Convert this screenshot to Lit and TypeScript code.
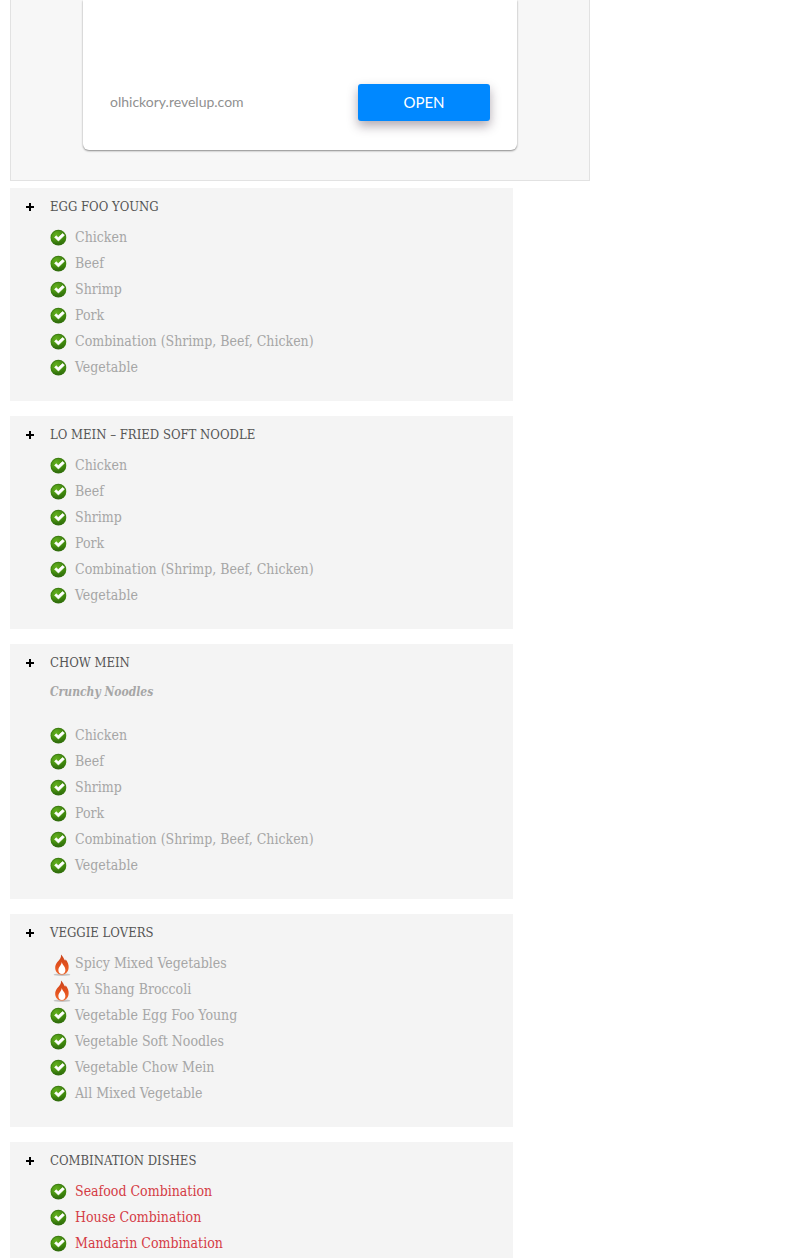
import { LitElement, html, css, nothing } from 'lit';
import { customElement } from 'lit/decorators.js';

type Mark = 'check' | 'flame';

interface Dish {
  name: string;
  mark?: Mark;
  featured?: boolean;
}

interface Section {
  title: string;
  note?: string;
  dishes: Dish[];
}

const proteins: Dish[] = [
  { name: 'Chicken' },
  { name: 'Beef' },
  { name: 'Shrimp' },
  { name: 'Pork' },
  { name: 'Combination (Shrimp, Beef, Chicken)' },
  { name: 'Vegetable' },
];

const sections: Section[] = [
  { title: 'EGG FOO YOUNG', dishes: proteins },
  { title: 'LO MEIN – FRIED SOFT NOODLE', dishes: proteins },
  { title: 'CHOW MEIN', note: 'Crunchy Noodles', dishes: proteins },
  {
    title: 'VEGGIE LOVERS',
    dishes: [
      { name: 'Spicy Mixed Vegetables', mark: 'flame' },
      { name: 'Yu Shang Broccoli', mark: 'flame' },
      { name: 'Vegetable Egg Foo Young' },
      { name: 'Vegetable Soft Noodles' },
      { name: 'Vegetable Chow Mein' },
      { name: 'All Mixed Vegetable' },
    ],
  },
  {
    title: 'COMBINATION DISHES',
    dishes: [
      { name: 'Seafood Combination', featured: true },
      { name: 'House Combination', featured: true },
      { name: 'Mandarin Combination', featured: true },
    ],
  },
];

const plusIcon = html`<svg class="plus" viewBox="0 0 8 8" aria-hidden="true">
  <path d="M3 0h2v3h3v2H5v3H3V5H0V3h3z" fill="#000" />
</svg>`;

const checkIcon = html`<svg class="mark" viewBox="0 0 25 26" aria-hidden="true">
  <defs>
    <linearGradient id="leaf" x1="0" y1="0" x2="0" y2="1">
      <stop offset="0" stop-color="#3c7a12" />
      <stop offset="0.5" stop-color="#3f8a0c" />
      <stop offset="1" stop-color="#2f6a0c" />
    </linearGradient>
    <radialGradient id="glow" cx="0.35" cy="0.3" r="0.6">
      <stop offset="0" stop-color="#62b01c" />
      <stop offset="1" stop-color="#62b01c" stop-opacity="0" />
    </radialGradient>
  </defs>
  <circle cx="8.4" cy="13.7" r="7.9" fill="url(#leaf)" />
  <circle cx="8.4" cy="13.7" r="7" fill="url(#glow)" />
  <path d="M4.6 13.2 L6.2 11.8 L8.2 13.6 L12.6 9.6 L14.4 11.2 L8.4 17 Z" fill="#fff" stroke="#fff" stroke-width="0.7" stroke-linejoin="round" />
</svg>`;

const flameIcon = html`<svg class="mark" viewBox="0 0 25 26" aria-hidden="true">
  <defs>
    <linearGradient id="fire" x1="0" y1="0" x2="0" y2="1">
      <stop offset="0" stop-color="#c8441c" />
      <stop offset="0.5" stop-color="#e2501e" />
      <stop offset="1" stop-color="#f0662a" />
    </linearGradient>
  </defs>
  <ellipse cx="12" cy="24.7" rx="8.4" ry="1.2" fill="#c4c4c4" />
  <path d="M11 4.5 C13.4 6.8 13.8 9 15 10.6 C15.5 10.4 15.6 9.8 15.5 9.2 C17.8 11.8 19 14.8 18.6 18 C18.2 22 15.6 24.6 12 24.6 C8.2 24.6 5.4 22 5.2 18.2 C5 15.4 6.2 13.6 7.4 12 C9.8 9.4 11.4 7.8 11 4.5 Z" fill="url(#fire)" />
  <path d="M11.8 12 C12.2 15 15.6 16.6 15.4 20.2 C15.2 22.6 14 24 12 24 C9.8 24 8.4 22.4 8.4 20.2 C8.4 17 11.4 15.4 11.8 12 Z" fill="#fff" />
</svg>`;

@customElement('app-root')
export class AppRoot extends LitElement {
  static styles = css`
    :host {
      display: block;
      box-sizing: border-box;
      height: 100vh;
      overflow: hidden;
      padding: 0 10px;
      background: #fff;
      font-family: 'DejaVu Serif Condensed', 'Liberation Serif', serif;
      font-size: 14px;
      color: #a6a6a6;
    }
    .promo {
      box-sizing: border-box;
      max-width: 580px;
      margin-bottom: 7px;
      padding: 0 72px 30px;
      border: 1px solid #e2e2e2;
      border-top: 0;
      background: #f7f7f7;
    }
    .card {
      display: flex;
      align-items: center;
      justify-content: space-between;
      gap: 16px;
      padding: 84px 27px 29px;
      border-radius: 0 0 6px 6px;
      background: #fff;
      box-shadow: 0 1px 2px rgba(0, 0, 0, 0.45);
      font-family: Lato, sans-serif;
      font-size: 14px;
    }
    .site {
      padding-bottom: 2px;
      color: #909090;
      text-decoration: none;
    }
    .open {
      width: 132px;
      height: 37px;
      padding: 0 0 2px;
      border: 0;
      border-radius: 3px;
      background: #0088ff;
      box-shadow: 0 5px 11px rgba(60, 40, 60, 0.4);
      color: #fff;
      font: inherit;
      font-size: 15px;
    }
    .menu {
      display: flex;
      flex-direction: column;
      gap: 15px;
      max-width: 503px;
    }
    .panel {
      padding: 7px 16px 21px;
      background: #f4f4f4;
    }
    .title {
      display: flex;
      align-items: center;
      gap: 16px;
      margin: 0;
      padding-bottom: 5px;
      font-size: 13px;
      font-weight: 400;
      line-height: 24px;
      color: #555;
    }
    .plus {
      width: 8px;
      height: 8px;
    }
    .note {
      margin: 0;
      padding: 0 24px 18px;
      font-size: 12px;
      font-weight: 700;
      font-style: italic;
      line-height: 24px;
    }
    .dishes {
      margin: 0;
      padding: 0 24px;
      list-style: none;
    }
    .dish {
      display: flex;
      line-height: 26px;
    }
    .mark {
      flex: none;
      width: 25px;
      height: 26px;
    }
    .featured {
      color: #d43c46;
    }
  `;

  private renderSection(section: Section) {
    return html`<section class="panel">
      <h3 class="title">${plusIcon}<span>${section.title}</span></h3>
      ${section.note ? html`<p class="note">${section.note}</p>` : nothing}
      <ul class="dishes">
        ${section.dishes.map(
          (dish) => html`<li class="dish">
            ${dish.mark === 'flame' ? flameIcon : checkIcon}
            <span class=${dish.featured ? 'featured' : 'name'}>${dish.name}</span>
          </li>`
        )}
      </ul>
    </section>`;
  }

  render() {
    return html`
      <aside class="promo">
        <div class="card">
          <a class="site" href="#">olhickory.revelup.com</a>
          <button class="open" type="button">OPEN</button>
        </div>
      </aside>
      <main class="menu">${sections.map((s) => this.renderSection(s))}</main>
    `;
  }
}
